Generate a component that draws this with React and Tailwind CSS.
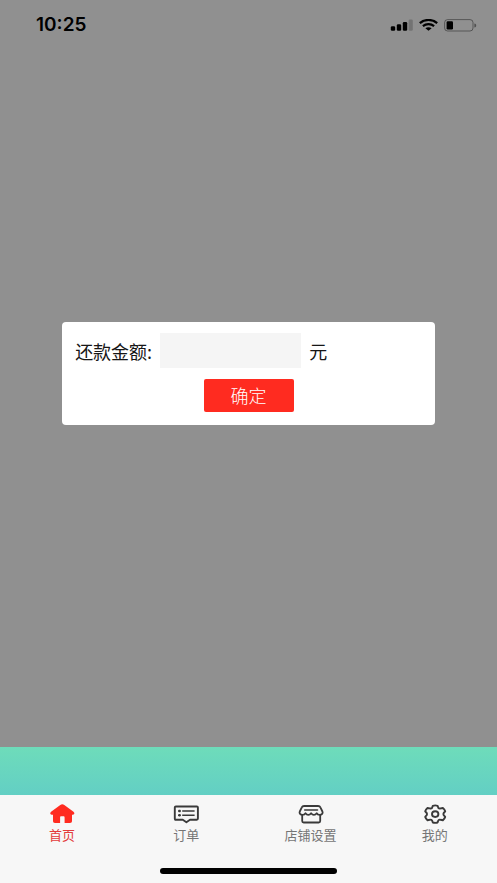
import { useState } from "react"

const TABS = [
  { key: "home",   label: "首页",     Icon: HomeIcon },
  { key: "orders", label: "订单",     Icon: OrderIcon },
  { key: "shop",   label: "店铺设置", Icon: ShopIcon },
  { key: "mine",   label: "我的",     Icon: GearIcon },
]

function StatusBar() {
  return (
    <header className="flex items-center justify-between h-[50px] pl-9 pr-5 text-black">
      <span className="font-['Inter',sans-serif] text-[19px] leading-6 font-semibold">10:25</span>
      <div className="flex items-center gap-1.5">
        <SignalIcon />
        <WifiIcon />
        <BatteryIcon />
      </div>
    </header>
  )
}

function RepayDialog() {
  const [amount, setAmount] = useState("")

  return (
    <form
      role="dialog"
      aria-label="还款金额"
      onSubmit={(e) => e.preventDefault()}
      className="flex flex-col items-center gap-[11px] w-3/4 rounded-[4px] bg-white px-[13px] pt-[11px] pb-[13px]"
    >
      <div className="flex items-center w-full text-lg text-[#161616]">
        <label htmlFor="amount" className="shrink-0">还款金额:</label>
        <input
          id="amount"
          inputMode="decimal"
          value={amount}
          onChange={(e) => setAmount(e.target.value)}
          className="w-[141px] h-[35px] mx-2 px-2 bg-[#f5f5f5] outline-none"
        />
        <span>元</span>
      </div>
      <button type="submit" className="w-[90px] h-[33px] pb-0.5 rounded-[2px] bg-[#ff2b20] text-lg leading-none font-light text-white">
        确定
      </button>
    </form>
  )
}

function TabBar() {
  const [active, setActive] = useState("home")

  return (
    <nav className="flex flex-col items-center justify-between bg-[#f7f7f7] pt-2 pb-[9px] h-[88px]">
      <div className="flex w-full">
        {TABS.map(({ key, label, Icon }) => (
          <button
            key={key}
            type="button"
            onClick={() => setActive(key)}
            className={`flex-1 flex flex-col items-center ${active === key ? "text-[#e33b3b]" : "text-[#757575]"}`}
          >
            <Icon />
            <span className="text-[13px] leading-5">{label}</span>
          </button>
        ))}
      </div>
      <div className="w-[177px] h-1.5 rounded-full bg-black" />
    </nav>
  )
}

export default function App() {
  return (
    <div className="flex flex-col min-h-screen font-['Noto_Sans_CJK_SC',sans-serif]">
      <main className="flex-1 flex flex-col bg-[#909090]">
        <StatusBar />
        <div className="flex-1 flex items-center justify-center pb-[50px]">
          <RepayDialog />
        </div>
      </main>
      <div className="h-12 bg-linear-to-b from-[#6edcba] to-[#63cfc4]" />
      <TabBar />
    </div>
  )
}

function SignalIcon() {
  return (
    <svg width="23" height="12" viewBox="0 0 23 12" fill="currentColor">
      <rect x="0.8" y="7.3" width="4.4" height="4.4" rx="1.3" />
      <rect x="6.8" y="5.3" width="4.4" height="6.4" rx="1.3" />
      <rect x="12.8" y="3" width="4.4" height="8.7" rx="1.3" />
      <rect x="18.6" y="0.5" width="4.2" height="11.2" rx="1.3" opacity="0.2" />
    </svg>
  )
}
function WifiIcon() {
  return (
    <svg width="19" height="12" viewBox="0 0 19 12" fill="none" stroke="currentColor" strokeWidth="2.2">
      <path d="M0.8 4.1C5.7 -0.1 13.3 -0.1 18.2 4.1" />
      <path d="M3.9 7.2C7.1 4.5 11.9 4.5 15.1 7.2" />
      <path d="M6.4 9.2C8.3 7.9 10.7 7.9 12.6 9.2L9.5 11.8Z" fill="currentColor" stroke="none" />
    </svg>
  )
}
function BatteryIcon() {
  return (
    <svg width="33" height="13" viewBox="0 0 33 13" fill="none">
      <rect x="0.6" y="0.6" width="28.4" height="11.4" rx="3" stroke="#000" strokeOpacity="0.4" />
      <rect x="2.6" y="2.2" width="6.4" height="8.2" rx="1.2" fill="#000" />
      <path d="M30.4 4.4c1.4.4 1.8 1.1 1.8 2s-.4 1.6-1.8 2z" fill="#000" fillOpacity="0.45" />
    </svg>
  )
}
function HomeIcon() {
  return (
    <svg width="26" height="22" viewBox="0 0 26 22" fill="#ff2b20">
      <path d="M11.3 2.1a3.4 3.4 0 0 1 4 0L24.5 8.8c1.4 1.2 1 2.9-.5 2.9H23v6.2c0 1.3-.7 2-2 2H15.6v-5.4c0-.8-.4-1.2-1.1-1.2h-2.3c-.7 0-1.1.4-1.1 1.2v5.4H6c-1.3 0-2-.7-2-2v-6.2H2.6c-1.5 0-1.9-1.7-.5-2.9z" />
    </svg>
  )
}
function OrderIcon() {
  return (
    <svg width="26" height="22" viewBox="0 0 26 22" fill="none" stroke="#3a3a3a" strokeWidth="1.9" strokeLinejoin="round">
      <path d="M2.9 3.5h20.9c.8 0 1.1.4 1.1 1.1v11c0 .8-.4 1.2-1.1 1.2h-6.8l-3.6 2.4-3.6-2.4H2.9c-.8 0-1.1-.4-1.1-1.2v-11c0-.7.3-1.1 1.1-1.1z" />
      <path d="M5 8h2.9M9.2 8h12.4M5 12.2h2.9M9.2 12.2h12.4" strokeWidth="1.5" />
      <path d="M6.5 6.8v2.4M6.5 11v2.4" strokeWidth="1.6" />
    </svg>
  )
}
function ShopIcon() {
  return (
    <svg width="26" height="22" viewBox="0 0 26 22" fill="none" stroke="#3a3a3a" strokeWidth="1.8" strokeLinecap="round" strokeLinejoin="round">
      <path d="M6.2 3h13.9c1.2 0 1.9.4 2.3 1.3l2 4.2c.8 2-.7 3.4-2.6 3.4-1.6 0-2.6-.6-3.1-1.7-.8 1.2-1.6 1.7-2.8 1.7s-2-.6-2.8-1.7c-.8 1.1-1.6 1.7-2.8 1.7s-2-.5-2.8-1.7c-.5 1.1-1.5 1.7-3.1 1.7-1.9 0-3.4-1.4-2.6-3.4l2-4.2c.4-.9 1.1-1.3 2.3-1.3z" />
      <path d="M6.7 7h12.8" strokeWidth="1.6" />
      <path d="M4.2 12.4v5.6c0 1 .5 1.5 1.5 1.5h15c1 0 1.5-.5 1.5-1.5v-5.6" />
    </svg>
  )
}
function GearIcon() {
  return (
    <svg width="26" height="22" viewBox="0 0 26 22" fill="none" stroke="#3a3a3a" strokeWidth="1.9" strokeLinejoin="round">
      <path d="M10.8 2.8Q13.2 2 15.6 2.8L16.3 4.8Q17.2 5.9 18.6 5.4L20.9 5Q22.6 6.4 23.2 8.3L21.7 10Q21 11.1 21.7 12.2L23.2 13.9Q22.6 15.8 20.9 17.2L18.6 16.8Q17.2 16.3 16.3 17.5L15.6 19.5Q13.2 20.3 10.8 19.5L10.1 17.5Q9.2 16.3 7.8 16.8L5.5 17.2Q3.8 15.8 3.2 13.9L4.7 12.2Q5.4 11.1 4.7 10L3.2 8.3Q3.8 6.4 5.5 5L7.8 5.4Q9.2 5.9 10.1 4.8Z" />
      <ellipse cx="13.2" cy="11.1" rx="3.2" ry="2.9" />
    </svg>
  )
}
